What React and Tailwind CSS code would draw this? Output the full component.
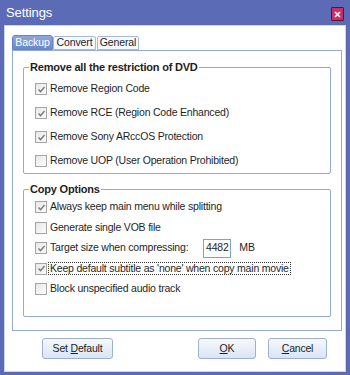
import React from 'react'

const FONT = { fontFamily: '"Liberation Sans", Tahoma, Arial, sans-serif' }

function Check({ checked }) {
  return (
    <span className="w-[12px] h-[12px] shrink-0 border border-[#a5a5a5] bg-gradient-to-br from-[#e8e8e8] to-[#fbfbfb] flex items-center justify-center">
      {checked && (
        <svg width="9" height="9" viewBox="0 0 9 9">
          <path d="M1.5 4.5 L3.6 6.6 L7.5 2" fill="none" stroke="#7a7a7a" strokeWidth="1.4" />
        </svg>
      )}
    </span>
  )
}

function Row({ checked, children, className = 'h-[24px]' }) {
  return (
    <div className={`flex items-center gap-[3px] pl-[11px] ${className}`}>
      <Check checked={checked} />
      {children}
    </div>
  )
}

function Btn({ children, className = '' }) {
  return (
    <button className={`h-[21px] rounded-[3px] border border-[#9db0d4] bg-gradient-to-b from-[#f6f9fd] to-[#d9e4f4] text-[10.5px] tracking-[-0.2px] text-[#1e1e1e] ${className}`}>
      {children}
    </button>
  )
}

export default function App() {
  return (
    <div className="w-[350px] h-[375px] bg-[#5c6bb6] flex flex-col text-[#1e1e1e]" style={FONT}>
      {/* title bar */}
      <div className="h-[25px] shrink-0 flex items-center justify-between pl-[6px] pr-[6px]">
        <span className="text-white text-[13px] tracking-[-0.1px]">Settings</span>
        <span className="w-[13px] h-[14px] mt-[3px] bg-[#c4306c] border border-[#5a1030] rounded-[1px] flex items-center justify-center">
          <svg width="7" height="7" viewBox="0 0 7 7">
            <path d="M1 1 L6 6 M6 1 L1 6" stroke="#fff" strokeWidth="1.6" />
          </svg>
        </span>
      </div>

      {/* body */}
      <div className="flex-1 mx-[4px] mb-[3px] bg-white border border-[#c9d3ee] flex flex-col">
        {/* tabs */}
        <div className="flex items-end pl-[7px] pt-[9px] h-[24px] text-[10.5px] tracking-[-0.1px]">
          <div className="w-[41px] h-[15px] rounded-t-[3px] bg-gradient-to-b from-[#8ea6dc] to-[#6c88cc] border border-[#6a82c4] text-white flex items-center justify-center">Backup</div>
          <div className="w-[43px] h-[14px] rounded-t-[2px] bg-[#f7f9fd] border border-[#a7b8df] flex items-center justify-center">Convert</div>
          <div className="w-[42px] h-[14px] rounded-t-[2px] bg-[#f7f9fd] border border-[#a7b8df] flex items-center justify-center ml-[1px]">General</div>
        </div>

        {/* panel */}
        <div className="ml-[7px] mr-[3px] h-[281px] border border-[#93aadc] pt-[9px] px-[10px] text-[10.5px] tracking-[-0.2px]">
          <fieldset className="border border-[#93aadc] rounded-[2px] h-[114px]">
            <legend className="ml-[5px] px-[1px] font-bold text-[11px] leading-[14px]">Remove all the restriction of DVD</legend>
            <div className="pt-[3px]">
              <Row checked>Remove Region Code</Row>
              <Row checked>Remove RCE (Region Code Enhanced)</Row>
              <Row checked>Remove Sony ARccOS Protection</Row>
              <Row>Remove UOP (User Operation Prohibited)</Row>
            </div>
          </fieldset>

          <fieldset className="border border-[#93aadc] rounded-[2px] h-[135px] mt-[8px]">
            <legend className="ml-[5px] px-[1px] font-bold text-[11px] leading-[14px]">Copy Options</legend>
            <div className="pt-[1px]">
              <Row checked className="h-[20.5px]">Always keep main menu while splitting</Row>
              <Row className="h-[20.5px]">Generate single VOB file</Row>
              <Row checked className="h-[20.5px]">
                <span>Target size when compressing:</span>
                <span className="ml-[12px] w-[28px] h-[19px] border border-[#7f9fd8] flex items-center justify-center">4482</span>
                <span className="ml-[5px]">MB</span>
              </Row>
              <Row checked className="h-[20.5px]">
                <span className="border border-dotted border-[#333] leading-[11px] px-[1px] -ml-[2px]">Keep default subtitle as 'none' when copy main movie</span>
              </Row>
              <Row className="h-[20.5px]">Block unspecified audio track</Row>
            </div>
          </fieldset>
        </div>

        {/* buttons */}
        <div className="flex mt-[7px] pl-[37px]">
          <Btn className="w-[71px]">Set <u>D</u>efault</Btn>
          <Btn className="w-[58px] ml-[85px]"><u>O</u>K</Btn>
          <Btn className="w-[59px] ml-[12px]"><u>C</u>ancel</Btn>
        </div>
      </div>
    </div>
  )
}
